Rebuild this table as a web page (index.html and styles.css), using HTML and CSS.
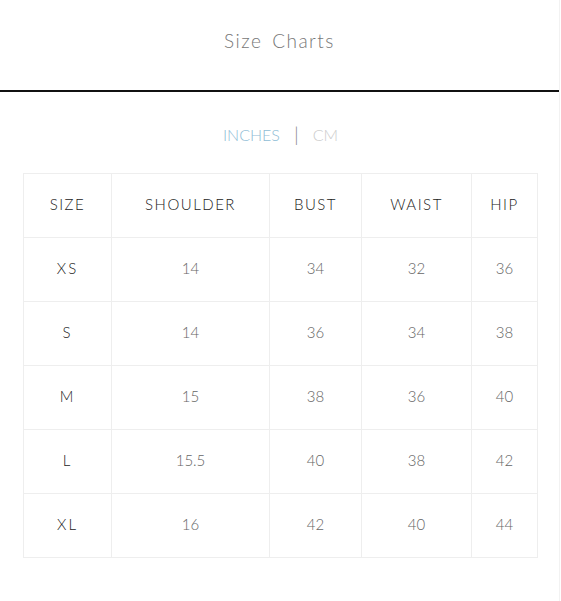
FILE: index.html
```html
<!DOCTYPE html>
<html>
<head>
<meta charset="utf-8">
<link rel="stylesheet" href="styles.css">
</head>
<body>
<div class="page">
  <header class="top">
    <h1 class="title">Size Charts</h1>
  </header>
  <div class="rule"></div>
  <div class="units">
    <span class="unit active">INCHES</span>
    <span class="sep">|</span>
    <span class="unit">CM</span>
  </div>
  <table class="chart">
    <colgroup>
      <col class="c1"><col class="c2"><col class="c3"><col class="c4"><col class="c5">
    </colgroup>
    <thead>
      <tr><th>SIZE</th><th>SHOULDER</th><th>BUST</th><th>WAIST</th><th>HIP</th></tr>
    </thead>
    <tbody>
      <tr><td class="sz">XS</td><td>14</td><td>34</td><td>32</td><td>36</td></tr>
      <tr><td class="sz">S</td><td>14</td><td>36</td><td>34</td><td>38</td></tr>
      <tr><td class="sz">M</td><td>15</td><td>38</td><td>36</td><td>40</td></tr>
      <tr><td class="sz">L</td><td>15.5</td><td>40</td><td>38</td><td>42</td></tr>
      <tr><td class="sz">XL</td><td>16</td><td>42</td><td>40</td><td>44</td></tr>
    </tbody>
  </table>
</div>
</body>
</html>
```
FILE: styles.css
```css
html, body {
  margin: 0;
  padding: 0;
  background: #fff;
}
body {
  font-family: "Lato", "Liberation Sans", sans-serif;
  font-weight: 300;
}
.page {
  width: 559px;
  height: 601px;
  border-right: 1px solid #f2f2f2;
  box-sizing: content-box;
}
.top {
  height: 90px;
  display: flex;
  justify-content: center;
}
.title {
  margin: 30px 0 0;
  font-size: 19px;
  font-weight: 300;
  letter-spacing: 1.5px;
  word-spacing: 3px;
  color: #777;
  line-height: 22px;
}
.rule {
  height: 2px;
  background: #111;
}
.units {
  display: flex;
  justify-content: center;
  align-items: center;
  gap: 14px;
  margin-top: 31px;
  height: 22px;
  font-size: 16px;
  padding-left: 2px;
}
.unit {
  color: #ccc;
  letter-spacing: 0;
}
.unit.active {
  color: #8fbdd6;
}
.sep {
  color: #888;
  font-size: 20px;
  font-weight: 300;
}
.chart {
  margin: 28px 0 0 23px;
  border-collapse: collapse;
  table-layout: fixed;
  width: 514px;
}
.c1 { width: 88px; }
.c2 { width: 158px; }
.c3 { width: 92px; }
.c4 { width: 110px; }
.c5 { width: 66px; }
.chart th, .chart td {
  border: 1px solid #eeeeee;
  height: 64px;
  padding: 0 0 4px;
  box-sizing: border-box;
  text-align: center;
  font-size: 15px;
}
.chart th {
  color: #222;
  letter-spacing: 1.5px;
  font-weight: 300;
}
.chart td {
  color: #666;
  font-weight: 300;
}
.chart td.sz {
  color: #222;
  letter-spacing: 2px;
  font-weight: 300;
}
```
